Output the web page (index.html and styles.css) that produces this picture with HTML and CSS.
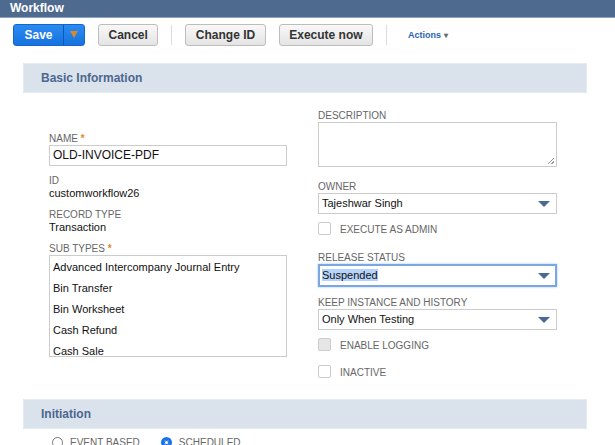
FILE: index.html
```html
<!DOCTYPE html>
<html lang="en">
<head>
  <meta charset="UTF-8">
  <title>Workflow</title>
  <link rel="stylesheet" href="styles.css">
</head>
<body>

  <div class="page-title">Workflow</div>

  <!-- Toolbar -->
  <div class="toolbar">
    <div class="btn-save">
      <span class="save-label">Save</span>
      <span class="save-menu"><span class="save-arrow"></span></span>
    </div>
    <button class="btn">Cancel</button>
    <span class="sep"></span>
    <button class="btn">Change ID</button>
    <button class="btn">Execute now</button>
    <span class="sep"></span>
    <a class="actions">Actions <span class="caret">▾</span></a>
  </div>

  <div class="content">
    <div class="section-head">Basic Information</div>

    <div class="form-grid">
      <div class="col col-left">
        <div class="field">
          <div class="label">NAME <span class="req">*</span></div>
          <div class="input">OLD-INVOICE-PDF</div>
        </div>
        <div class="field">
          <div class="label">ID</div>
          <div class="value">customworkflow26</div>
        </div>
        <div class="field">
          <div class="label">RECORD TYPE</div>
          <div class="value">Transaction</div>
        </div>
        <div class="field">
          <div class="label">SUB TYPES <span class="req">*</span></div>
          <div class="listbox">
            <div>Advanced Intercompany Journal Entry</div>
            <div>Bin Transfer</div>
            <div>Bin Worksheet</div>
            <div>Cash Refund</div>
            <div>Cash Sale</div>
          </div>
        </div>
      </div>

      <div class="col col-right">
        <div class="field f-desc">
          <div class="label">DESCRIPTION</div>
          <div class="textarea"><span class="grip"></span></div>
        </div>
        <div class="field f-owner">
          <div class="label">OWNER</div>
          <div class="select">Tajeshwar Singh<span class="sel-arrow"></span></div>
        </div>
        <div class="check c-admin"><span class="box"></span>EXECUTE AS ADMIN</div>
        <div class="field f-release">
          <div class="label">RELEASE STATUS</div>
          <div class="select focused"><span class="hl">Suspended</span><span class="sel-arrow"></span></div>
        </div>
        <div class="field f-keep">
          <div class="label">KEEP INSTANCE AND HISTORY</div>
          <div class="select">Only When Testing<span class="sel-arrow"></span></div>
        </div>
        <div class="check c-logging"><span class="box disabled"></span>ENABLE LOGGING</div>
        <div class="check"><span class="box"></span>INACTIVE</div>
      </div>
    </div>

    <div class="section-head">Initiation</div>
    <div class="radios">
      <label class="radio"><span class="dot"></span>EVENT BASED</label>
      <label class="radio"><span class="dot on"></span>SCHEDULED</label>
    </div>
  </div>

</body>
</html>
```

FILE: styles.css
```css
body {
  margin: 0;
  font-family: "Liberation Sans", Arial, sans-serif;
  background-color: #fff;
  color: #222;
}
.page-title {
  height: 18px;
  background-color: #4f6a8f;
  color: #fff;
  font-size: 12px;
  font-weight: bold;
  line-height: 16px;
  padding-left: 10px;
  border-bottom: 1px solid #8fa2bc;
  box-sizing: border-box;
}
/* Toolbar */
.toolbar {
  display: flex;
  align-items: center;
  gap: 13px;
  padding: 5px 13px 0;
  height: 23px;
}
.btn-save {
  display: flex;
  height: 22px;
  width: 72px;
  border-radius: 3px;
  background: linear-gradient(#2c8bf2, #1572de);
  border: 1px solid #1467c9;
  box-sizing: border-box;
  color: #fff;
  font-size: 12px;
  font-weight: bold;
}
.save-label {
  width: 49px;
  line-height: 20px;
  text-align: center;
}
.save-menu {
  flex: 1;
  border-left: 1px solid #1059b0;
  display: flex;
  align-items: center;
  justify-content: center;
}
.save-arrow {
  width: 0;
  height: 0;
  border-left: 4px solid transparent;
  border-right: 4px solid transparent;
  border-top: 7px solid #d9892c;
}
.btn {
  height: 22px;
  padding: 0 9.5px;
  font-family: "Liberation Sans", Arial, sans-serif;
  font-size: 12px;
  font-weight: bold;
  color: #333;
  background: linear-gradient(#f8f8f8, #e4e4e4);
  border: 1px solid #bdbdbd;
  border-radius: 3px;
}
.sep {
  width: 1px;
  height: 20px;
  background-color: #dcdcdc;
}
.actions {
  margin-left: 8px;
  font-size: 9px;
  font-weight: bold;
  color: #2a62b3;
}
.caret {
  font-size: 8px;
  color: #666;
}
/* Content */
.content {
  width: 564px;
  margin: 17px 0 0 23px;
}
.section-head {
  height: 30px;
  box-sizing: border-box;
  background-color: #dae2ec;
  border: 1px solid #e4eaf2;
  padding-left: 17px;
  line-height: 28px;
  font-size: 12px;
  font-weight: bold;
  color: #4d6790;
}
.form-grid {
  display: grid;
  grid-template-columns: 238px 239px;
  column-gap: 31px;
  padding: 17px 0 21px 26px;
}
.col-left {
  padding-top: 23px;
}
.col-left .field {
  margin-bottom: 9px;
}
.col-left .field:last-child {
  margin-bottom: 0;
}
.label {
  font-size: 10px;
  color: #666;
  line-height: 12px;
}
.req {
  color: #e08a1e;
  font-weight: bold;
}
.input,
.select {
  position: relative;
  height: 21px;
  box-sizing: border-box;
  border: 1px solid #ccc;
  line-height: 19px;
  padding-left: 3px;
  color: #111;
}
.input {
  font-size: 12px;
}
.select {
  font-size: 11px;
}
.value {
  font-size: 11px;
  line-height: 13px;
  color: #111;
}
.listbox {
  height: 102px;
  box-sizing: border-box;
  border: 1px solid #ccc;
  overflow: hidden;
  font-size: 11px;
  color: #111;
  padding: 1px 0 0 3px;
}
.listbox div {
  line-height: 21px;
}
.textarea {
  position: relative;
  height: 45px;
  box-sizing: border-box;
  border: 1px solid #ccc;
}
.grip {
  position: absolute;
  right: 2px;
  bottom: 2px;
  width: 6px;
  height: 6px;
  background: linear-gradient(135deg, transparent 45%, #999 45%, #999 55%, transparent 55%, transparent 75%, #999 75%, #999 85%, transparent 85%);
}
/* right column spacing */
.f-desc {
  margin-bottom: 14px;
}
.f-owner {
  margin-bottom: 8px;
}
.c-admin {
  margin-bottom: 17px;
}
.f-release {
  margin-bottom: 10px;
}
.f-keep {
  margin-bottom: 8px;
}
.c-logging {
  margin-bottom: 14px;
}
.sel-arrow {
  position: absolute;
  right: 6px;
  top: 7px;
  width: 0;
  height: 0;
  border-left: 6px solid transparent;
  border-right: 6px solid transparent;
  border-top: 6px solid #4a6a96;
}
.select.focused {
  height: 23px;
  border: 2px solid #7aa7e0;
  box-shadow: 0 0 2px #9cc0ef;
  line-height: 19px;
  padding-left: 2px;
}
.select.focused .sel-arrow {
  top: 7px;
  right: 5px;
}
.hl {
  background-color: #b5d3fb;
}
.check {
  display: flex;
  align-items: flex-end;
  font-size: 10px;
  line-height: 11px;
  color: #666;
  height: 13px;
}
.box {
  width: 13px;
  height: 13px;
  box-sizing: border-box;
  border: 1px solid #ccc;
  border-radius: 2px;
  margin-right: 9px;
  background-color: #fff;
}
.box.disabled {
  background-color: #e6e6e6;
}
.radios {
  display: flex;
  gap: 21px;
  padding: 8px 0 0 29px;
  font-size: 10px;
  color: #666;
}
.radio {
  display: flex;
  align-items: center;
}
.dot {
  width: 11px;
  height: 11px;
  box-sizing: border-box;
  border: 1px solid #777;
  border-radius: 50%;
  margin-right: 7px;
}
.dot.on {
  border: 3px solid #1a73e8;
  background-color: #fff;
  box-shadow: 0 0 0 1px #1a73e8 inset;
}
```
